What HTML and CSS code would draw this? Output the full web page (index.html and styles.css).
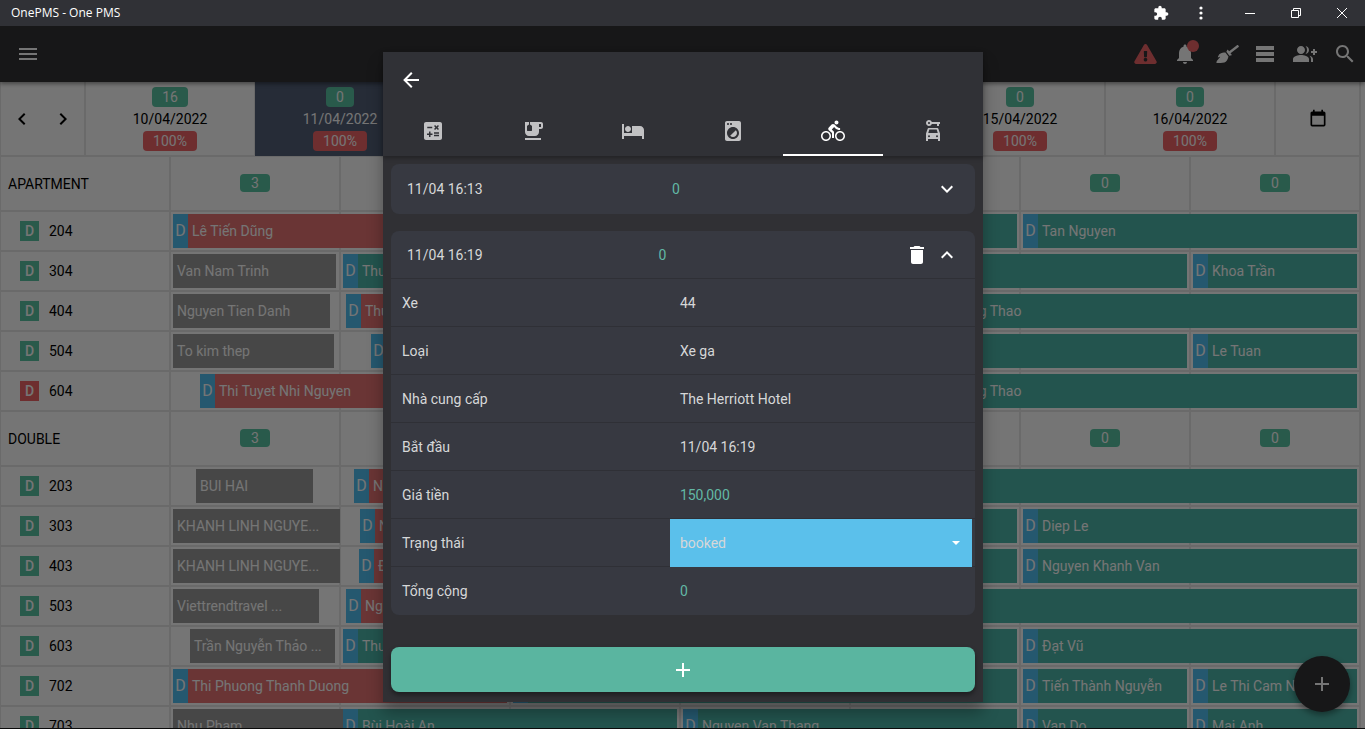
FILE: index.html
```html
<!DOCTYPE html>
<html lang="vi">
<head>
<meta charset="utf-8">
<title>OnePMS - One PMS</title>
<link rel="stylesheet" href="styles.css">
</head>
<body>
<div class="titlebar">
  <span class="titlebar-name">OnePMS - One PMS</span>
  <button class="win-btn" aria-label="Extensions"><svg width="16" height="16" viewBox="0 0 24 24"><path d="M20.5 11H19V7c0-1.1-.9-2-2-2h-4V3.5C13 2.12 11.88 1 10.5 1S8 2.12 8 3.5V5H4c-1.1 0-1.99.9-1.99 2v3.8H3.5c1.49 0 2.7 1.21 2.7 2.7s-1.21 2.7-2.7 2.7H2V20c0 1.1.9 2 2 2h3.8v-1.5c0-1.49 1.21-2.7 2.7-2.7 1.49 0 2.7 1.21 2.7 2.7V22H17c1.1 0 2-.9 2-2v-4h1.5c1.38 0 2.5-1.12 2.5-2.5S21.88 11 20.5 11z"/></svg></button>
  <button class="win-btn" aria-label="More"><svg width="4" height="14" viewBox="0 0 4 14"><circle cx="2" cy="2" r="1.6"/><circle cx="2" cy="7" r="1.6"/><circle cx="2" cy="12" r="1.6"/></svg></button>
  <button class="win-btn wide" aria-label="Minimize"><svg width="10" height="10" viewBox="0 0 10 10"><path d="M0 5h10v1H0z"/></svg></button>
  <button class="win-btn wide" aria-label="Restore"><svg class="stroke" width="10" height="10" viewBox="0 0 10 10"><path d="M.5 2.5h7v7h-7zM2.500 2.500v-2h7v7h-2"/></svg></button>
  <button class="win-btn wide" aria-label="Close"><svg class="stroke" width="10" height="10" viewBox="0 0 10 10"><path d="M0 0l10 10M10 0L0 10"/></svg></button>
</div>

<div class="app">
  <header class="topbar">
    <button class="top-btn menu" aria-label="Menu"><svg width="24" height="24" viewBox="0 0 24 24"><path d="M3 6h18v2H3zM3 11h18v2H3zM3 16h18v2H3z"/></svg></button>
    <button class="top-btn alert" aria-label="Alerts"><svg width="23" height="20" viewBox="0 0 576 512"><path d="M569.517 440.013C587.975 472.007 564.806 512 527.94 512H48.054c-36.937 0-59.999-40.055-41.577-71.987L246.423 23.985c18.467-32.009 64.72-31.951 83.154 0l239.94 416.028zM288 354c-25.405 0-46 20.595-46 46s20.595 46 46 46 46-20.595 46-46-20.595-46-46-46zm-43.673-165.346l7.418 136c.347 6.364 5.609 11.346 11.982 11.346h48.546c6.373 0 11.635-4.982 11.982-11.346l7.418-136c.375-6.874-5.098-12.654-11.982-12.654h-63.383c-6.884 0-12.356 5.78-11.981 12.654z"/></svg></button>
    <button class="top-btn" aria-label="Notifications"><svg width="24" height="24" viewBox="0 0 24 24"><path d="M12 22c1.100 0 2-.9 2-2h-4c0 1.100.89 2 2 2zm6-6v-5c0-3.070-1.640-5.640-4.500-6.320V4c0-.83-.67-1.500-1.500-1.500s-1.500.67-1.500 1.500v.68C7.630 5.360 6 7.920 6 11v5l-2 2v1h16v-1l-2-2z"/></svg><span class="dot"></span></button>
    <button class="top-btn" aria-label="Housekeeping"><svg width="28" height="18" viewBox="-150 0 790 512"><path d="M256.470 216.770l86.730 109.180s-16.600 102.360-76.570 150.120C206.660 523.850 0 510.190 0 510.190s3.800-23.140 11-55.430l94.620-112.170c3.970-4.700-.87-11.620-6.650-9.500l-60.400 22.090c14.440-41.660 32.720-80.040 54.600-97.470 59.970-47.760 163.300-40.940 163.300-40.940zM636.530 31.030l-19.860-25c-5.490-6.900-15.520-8.050-22.410-2.560l-232.480 177.800-34.140-42.970c-5.090-6.410-15.140-5.210-18.590 2.210l-25.330 54.550 86.730 109.180 58.800-12.450c8-1.690 11.420-11.200 6.340-17.600l-34.090-42.920 232.480-177.800c6.890-5.480 8.040-15.530 2.550-22.440z"/></svg></button>
    <button class="top-btn" aria-label="List"><svg width="18" height="16" viewBox="0 0 18 16"><path d="M0 0h18v4H0zM0 6h18v4H0zM0 12h18v4H0z"/></svg></button>
    <button class="top-btn" aria-label="Add guests"><svg width="24" height="24" viewBox="0 0 24 24"><path d="M22 9V7h-2v2h-2v2h2v2h2v-2h2V9zM8 12c2.210 0 4-1.790 4-4s-1.790-4-4-4-4 1.790-4 4 1.790 4 4 4zm0 1c-2.670 0-8 1.340-8 4v3h16v-3c0-2.660-5.330-4-8-4zm4.510-8.950C13.430 5.110 14 6.490 14 8s-.57 2.890-1.490 3.950C14.470 11.700 16 10.040 16 8s-1.530-3.700-3.490-3.950zm4.020 9.780C17.420 14.660 18 15.700 18 17v3h2v-3c0-1.450-1.590-2.510-3.470-3.170z"/></svg></button>
    <button class="top-btn" aria-label="Search"><svg width="24" height="24" viewBox="0 0 24 24"><path d="M15.500 14h-.79l-.28-.27C15.410 12.590 16 11.110 16 9.500 16 5.910 13.090 3 9.500 3S3 5.910 3 9.500 5.910 16 9.500 16c1.610 0 3.090-.59 4.230-1.570l.27.28v.79l5 4.990L20.490 19l-4.990-5zm-6 0C7.010 14 5 11.990 5 9.500S7.010 5 9.500 5 14 7.010 14 9.500 11.990 14 9.500 14z"/></svg></button>
  </header>

  <main class="board">
    <div class="days">
      <div class="day-nav">
        <button aria-label="Previous"><svg width="24" height="24" viewBox="0 0 24 24"><path d="M15.410 16.580L10.830 12l4.580-4.590L14 6l-6 6 6 6z"/></svg></button>
        <button aria-label="Next"><svg width="24" height="24" viewBox="0 0 24 24"><path d="M8.590 16.580L13.170 12 8.590 7.410 10 6l6 6-6 6z"/></svg></button>
      </div>
      <div class="day"><span class="tag">16</span><span>10/04/2022</span><span class="tag full">100%</span></div>
      <div class="day today"><span class="tag">0</span><span>11/04/2022</span><span class="tag full">100%</span></div>
      <div class="day"></div>
      <div class="day"></div>
      <div class="day"></div>
      <div class="day"><span class="tag">0</span><span>15/04/2022</span><span class="tag full">100%</span></div>
      <div class="day"><span class="tag">0</span><span>16/04/2022</span><span class="tag full">100%</span></div>
      <div class="day-nav"><button aria-label="Pick a date"><svg width="20" height="20" viewBox="0 0 24 24"><path d="M19 19H5V8h14M16 1v2H8V1H6v2H5c-1.110 0-2 .89-2 2v14a2 2 0 0 0 2 2h14a2 2 0 0 0 2-2V5c0-1.110-.9-2-2-2h-1V1"/></svg></button></div>
    </div>

    <div class="group"><div class="group-name">APARTMENT</div><div class="counts"><span class="tag n1">3</span><span class="tag n6">0</span><span class="tag n7">0</span></div></div>
    <div class="row"><div class="room"><b class="state">D</b>204</div><div class="track">
      <div class="bar red" style="grid-column:4/338"><i>D</i><span>Lê Tiến Dũng</span></div>
      <div class="bar" style="grid-column:344/848"></div>
      <div class="bar" style="grid-column:854/1188"><i>D</i><span>Tan Nguyen</span></div></div></div>
    <div class="row"><div class="room"><b class="state">D</b>304</div><div class="track">
      <div class="bar past" style="grid-column:4/167"><span>Van Nam Trinh</span></div>
      <div class="bar" style="grid-column:174/1018"><i>D</i><span>Thu</span></div>
      <div class="bar" style="grid-column:1024/1188"><i>D</i><span>Khoa Trần</span></div></div></div>
    <div class="row"><div class="room"><b class="state">D</b>404</div><div class="track">
      <div class="bar past" style="grid-column:4/161"><span>Nguyen Tien Danh</span></div>
      <div class="bar red" style="grid-column:177/338"><i>D</i><span>Thu</span></div>
      <div class="bar" style="grid-column:700/1188"><i>D</i><span>Nguyen Phuong Thao</span></div></div></div>
    <div class="row"><div class="room"><b class="state">D</b>504</div><div class="track">
      <div class="bar past" style="grid-column:4/165"><span>To kim thep</span></div>
      <div class="bar" style="grid-column:202/1018"><i>D</i></div>
      <div class="bar" style="grid-column:1024/1188"><i>D</i><span>Le Tuan</span></div></div></div>
    <div class="row"><div class="room"><b class="state dirty">D</b>604</div><div class="track">
      <div class="bar red" style="grid-column:31/338"><i>D</i><span>Thi Tuyet Nhi Nguyen</span></div>
      <div class="bar" style="grid-column:700/1188"><i>D</i><span>Nguyen Phuong Thao</span></div></div></div>

    <div class="group"><div class="group-name">DOUBLE</div><div class="counts"><span class="tag n1">3</span><span class="tag n6">0</span><span class="tag n7">0</span></div></div>
    <div class="row"><div class="room"><b class="state">D</b>203</div><div class="track">
      <div class="bar past" style="grid-column:27/144"><span>BUI HAI</span></div>
      <div class="bar red" style="grid-column:185/338"><i>D</i><span>Ng</span></div>
      <div class="bar" style="grid-column:344/1188"></div></div></div>
    <div class="row"><div class="room"><b class="state">D</b>303</div><div class="track">
      <div class="bar past" style="grid-column:4/171"><span>KHANH LINH NGUYE...</span></div>
      <div class="bar red" style="grid-column:191/338"><i>D</i><span>N</span></div>
      <div class="bar" style="grid-column:344/848"></div>
      <div class="bar" style="grid-column:854/1188"><i>D</i><span>Diep Le</span></div></div></div>
    <div class="row"><div class="room"><b class="state">D</b>403</div><div class="track">
      <div class="bar past" style="grid-column:4/171"><span>KHANH LINH NGUYE...</span></div>
      <div class="bar red" style="grid-column:190/338"><i>D</i><span>Đ</span></div>
      <div class="bar" style="grid-column:344/848"></div>
      <div class="bar" style="grid-column:854/1188"><i>D</i><span>Nguyen Khanh Van</span></div></div></div>
    <div class="row"><div class="room"><b class="state">D</b>503</div><div class="track">
      <div class="bar past" style="grid-column:4/150"><span>Viettrendtravel ...</span></div>
      <div class="bar red" style="grid-column:177/338"><i>D</i><span>Ng</span></div>
      <div class="bar" style="grid-column:344/1188"></div></div></div>
    <div class="row"><div class="room"><b class="state">D</b>603</div><div class="track">
      <div class="bar past" style="grid-column:21/166"><span>Trần Nguyễn Thảo ...</span></div>
      <div class="bar" style="grid-column:174/848"><i>D</i><span>Thu</span></div>
      <div class="bar" style="grid-column:854/1188"><i>D</i><span>Đạt Vũ</span></div></div></div>
    <div class="row"><div class="room"><b class="state">D</b>702</div><div class="track">
      <div class="bar red" style="grid-column:4/338"><i>D</i><span>Thi Phuong Thanh Duong</span></div>
      <div class="bar" style="grid-column:344/848"><i>D</i></div>
      <div class="bar" style="grid-column:854/1018"><i>D</i><span>Tiến Thành Nguyễn</span></div>
      <div class="bar" style="grid-column:1024/1188"><i>D</i><span>Le Thi Cam Nhung</span></div></div></div>
    <div class="row"><div class="room"><b class="state">D</b>703</div><div class="track">
      <div class="bar past" style="grid-column:4/174"><span>Nhu Pham</span></div>
      <div class="bar" style="grid-column:174/508"><i>D</i><span>Bùi Hoài An</span></div>
      <div class="bar" style="grid-column:514/848"><i>D</i><span>Nguyen Van Thang</span></div>
      <div class="bar" style="grid-column:854/1018"><i>D</i><span>Van Do</span></div>
      <div class="bar" style="grid-column:1024/1188"><i>D</i><span>Mai Anh</span></div></div></div>
  </main>
  <button class="fab" aria-label="New booking"><svg width="24" height="24" viewBox="0 0 24 24"><path d="M19 13h-6v6h-2v-6H5v-2h6V5h2v6h6z"/></svg></button>

  <div class="overlay">
    <section class="dialog" role="dialog" aria-label="Dịch vụ">
      <div class="dialog-head">
        <div class="dialog-bar"><button class="back" aria-label="Back"><svg width="24" height="24" viewBox="0 0 24 24"><path d="M20 11v2H8l5.500 5.500-1.420 1.420L4.160 12l7.920-7.920L13.500 5.500 8 11z"/></svg></button></div>
        <nav class="tabs">
          <button class="tab" aria-label="Calculator"><svg width="24" height="24" viewBox="0 0 24 24"><path d="M19 3H5c-1.100 0-2 .9-2 2v14c0 1.100.9 2 2 2h14c1.100 0 2-.9 2-2V5c0-1.100-.9-2-2-2zm-5.970 4.060L14.090 6l1.410 1.410L16.910 6l1.060 1.060-1.410 1.410 1.410 1.410-1.060 1.060-1.410-1.400-1.410 1.410-1.060-1.060 1.410-1.410-1.410-1.420zm-6.780.66h5v1.500h-5v-1.500zM11.500 16h-2v2H8v-2H6v-1.500h2v-2h1.500v2h2V16zm6.500 1.250h-5v-1.500h5v1.500zm0-2.500h-5v-1.500h5v1.500z"/></svg></button>
          <button class="tab" aria-label="Minibar"><svg width="24" height="24" viewBox="0 0 24 24"><path d="M20 3H9v2.400l1.810 1.450c.12.090.19.240.19.390v4.260c0 .28-.22.500-.5.500h-4c-.28 0-.5-.22-.5-.5V7.240c0-.15.070-.3.190-.39L8 5.400V3H4v10c0 2.210 1.790 4 4 4h6c2.210 0 4-1.790 4-4v-3h2c1.110 0 2-.89 2-2V5c0-1.110-.89-2-2-2zm0 5h-2V5h2v3zM4 19h16v2H4z"/></svg></button>
          <button class="tab" aria-label="Room"><svg width="24" height="24" viewBox="0 0 24 24"><path d="M7 13c1.660 0 3-1.340 3-3S8.660 7 7 7s-3 1.340-3 3 1.340 3 3 3zm12-6h-8v7H3V5H1v15h2v-3h18v3h2v-9c0-2.210-1.790-4-4-4z"/></svg></button>
          <button class="tab" aria-label="Laundry"><svg width="24" height="24" viewBox="0 0 24 24"><path d="M9.170 16.830c1.560 1.560 4.100 1.560 5.660 0 1.560-1.560 1.560-4.100 0-5.660l-5.660 5.660zM18 2.010L6 2c-1.110 0-2 .89-2 2v16c0 1.110.89 2 2 2h12c1.110 0 2-.89 2-2V4c0-1.110-.89-1.990-2-1.990zM10 4c.55 0 1 .45 1 1s-.45 1-1 1-1-.45-1-1 .45-1 1-1zM7 4c.55 0 1 .45 1 1s-.45 1-1 1-1-.45-1-1 .45-1 1-1zm5 16c-3.310 0-6-2.690-6-6s2.690-6 6-6 6 2.690 6 6-2.690 6-6 6z"/></svg></button>
          <button class="tab active" aria-label="Bike rental"><svg width="24" height="24" viewBox="0 0 24 24"><path d="M15.500 5.500c1.100 0 2-.9 2-2s-.9-2-2-2-2 .9-2 2 .9 2 2 2zM5 12c-2.800 0-5 2.200-5 5s2.200 5 5 5 5-2.200 5-5-2.200-5-5-5zm0 8.500c-1.900 0-3.500-1.600-3.500-3.500s1.600-3.500 3.500-3.500 3.500 1.600 3.500 3.500-1.600 3.500-3.500 3.500zm5.800-10l2.400-2.400.8.8c1.300 1.300 3 2.100 5.100 2.100V9c-1.500 0-2.700-.6-3.600-1.500l-1.900-1.900c-.5-.4-1-.6-1.600-.6s-1.100.2-1.400.6L7.800 8.400c-.4.4-.6.9-.6 1.400 0 .6.2 1.100.6 1.400L11 14v5h2v-6.200l-2.200-2.300zM19 12c-2.800 0-5 2.200-5 5s2.200 5 5 5 5-2.200 5-5-2.200-5-5-5zm0 8.500c-1.900 0-3.500-1.600-3.500-3.500s1.600-3.500 3.500-3.500 3.500 1.600 3.500 3.500-1.600 3.500-3.500 3.500z"/></svg></button>
          <button class="tab" aria-label="Car rental"><svg width="24" height="24" viewBox="0 0 24 24"><path fill-rule="evenodd" d="M10.830 3C10.410 1.830 9.300 1 8 1 6.340 1 5 2.340 5 4s1.340 3 3 3c1.300 0 2.410-.84 2.830-2H16v2h2V5h1V3zM8 5c-.55 0-1-.45-1-1s.45-1 1-1 1 .45 1 1-.45 1-1 1zM16.390 9H7.610c-.43 0-.81.28-.95.68L5 14.500V22h2v-2h10v2h2v-7.500l-1.660-4.820c-.14-.4-.52-.68-.95-.68zM8.330 10.500h7.340l1.080 3.500H7.250zM8 16.200a1 1 0 1 1 0 2 1 1 0 0 1 0-2zm8 0a1 1 0 1 1 0 2 1 1 0 0 1 0-2z"/></svg></button>
        </nav>
      </div>
      <div class="dialog-body">
        <article class="card">
          <div class="card-head tall"><span>11/04 16:13</span><span class="money">0</span><button aria-label="Expand"><svg width="24" height="24" viewBox="0 0 24 24"><path d="M7.410 8.580L12 13.170l4.590-4.590L18 10l-6 6-6-6z"/></svg></button></div>
        </article>
        <article class="card">
          <div class="card-head"><span>11/04 16:19</span><span class="money">0</span><button class="trash" aria-label="Delete"><svg width="24" height="24" viewBox="0 0 24 24"><path d="M6 19c0 1.100.9 2 2 2h8c1.100 0 2-.9 2-2V7H6v12zM19 4h-3.500l-1-1h-5l-1 1H5v2h14V4z"/></svg></button><button aria-label="Collapse"><svg width="24" height="24" viewBox="0 0 24 24"><path d="M7.410 15.410L12 10.830l4.590 4.580L18 14l-6-6-6 6z"/></svg></button></div>
          <div class="field"><span>Xe</span><span class="value">44</span></div>
          <div class="field"><span>Loại</span><span class="value">Xe ga</span></div>
          <div class="field"><span>Nhà cung cấp</span><span class="value">The Herriott Hotel</span></div>
          <div class="field"><span>Bắt đầu</span><span class="value">11/04 16:19</span></div>
          <div class="field"><span>Giá tiền</span><span class="value money">150,000</span></div>
          <div class="field"><label for="status">Trạng thái</label><div class="status"><select id="status"><option>booked</option></select><svg width="8" height="4" viewBox="0 0 8 4"><path d="M0 0h8L4 4z"/></svg></div></div>
          <div class="field"><span>Tổng cộng</span><span class="value money">0</span></div>
        </article>
        <button class="add" aria-label="Add"><svg width="24" height="24" viewBox="0 0 24 24"><path d="M19 13h-6v6h-2v-6H5v-2h6V5h2v6h6z"/></svg></button>
      </div>
    </section>
  </div>
</div>
</body>
</html>
```

FILE: styles.css
```css
* { box-sizing: border-box; }

body {
  margin: 0;
  height: 100vh;
  display: flex;
  flex-direction: column;
  overflow: hidden;
  font: 14px/20px Roboto, "Noto Sans", sans-serif;
  color: #000;
  background: #fff;
}

button {
  display: flex;
  align-items: center;
  justify-content: center;
  padding: 0;
  border: 0;
  background: none;
  color: inherit;
  font: inherit;
}

svg { display: block; flex: none; fill: currentColor; }
.stroke { fill: none; stroke: currentColor; }

/* Window title bar */
.titlebar {
  display: flex;
  flex: none;
  align-items: stretch;
  height: 26px;
  padding-left: 11px;
  background: #303136;
  color: #fff;
}
.titlebar-name { margin-right: auto; font: 12px/26px "Open Sans", sans-serif; }
.win-btn { width: 40px; }
.win-btn.wide { width: 46px; }
.win-btn:nth-child(3) { margin-right: 6px; }

.app {
  position: relative;
  flex: 1;
  min-height: 0;
  overflow: hidden;
  border-bottom: 1px solid #0a0a0a;
}

/* Application bar */
.topbar {
  position: relative;
  display: flex;
  align-items: center;
  height: 56px;
  padding-left: 8px;
  background: #323235;
  color: #fff;
  box-shadow: 0 2px 4px rgba(0, 0, 0, .4);
}
.top-btn { position: relative; width: 40px; height: 40px; }
.top-btn.menu { margin-right: auto; }
.top-btn.alert { color: #f06568; }
.dot {
  position: absolute;
  top: 6px;
  right: 6px;
  width: 12px;
  height: 12px;
  border-radius: 50%;
  background: #f06568;
}

/* Booking board */
.board { margin-right: 4px; border-right: 1px solid #e6e6e6; }
.days { display: grid; grid-template-columns: 1fr repeat(7, 2fr) 1fr; height: 74px; }
.day, .day-nav { border: 1px solid #e6e6e6; border-top: 0; display: flex; align-items: center; }
.day { flex-direction: column; padding-top: 5px; gap: 2px; }
.day-nav { justify-content: space-around; }
.today { background: #536078; border-color: #536078; color: #fff; }
.tag {
  min-width: 28px;
  padding: 0 10px;
  border-radius: 4px;
  background: #5bc4a3;
  color: #fff;
  line-height: 20px;
  text-align: center;
}
.tag.full { background: #f06568; }

.group, .row { display: grid; grid-template-columns: 1fr 7fr; }
.group { height: 55px; }
.row { height: 40px; }
.group-name, .room {
  display: flex;
  align-items: center;
  border: 1px solid #e6e6e6;
  padding-left: 7px;
}
.room { padding-left: 19px; gap: 10px; }
.state {
  width: 19px;
  background: #5bc4a3;
  color: #fff;
  font-weight: 500;
  text-align: center;
}
.state.dirty { background: #f06568; }
.counts, .track {
  display: grid;
  border: solid #e6e6e6;
  border-width: 1px 0;
  background: linear-gradient(to right, #e6e6e6 1px, transparent 1px, transparent calc(100% - 1px), #e6e6e6 calc(100% - 1px)) 0 0 / calc(100% / 7) 100%;
}
.counts {
  grid-template-columns: repeat(7, 1fr);
  align-items: center;
  justify-items: center;
  padding-bottom: 2px;
}
.counts .tag { width: 30px; line-height: 18px; }
.n1 { grid-column: 1; }
.n6 { grid-column: 6; }
.n7 { grid-column: 7; }
.track { grid-template-columns: repeat(1190, minmax(0, 1fr)); padding: 2px 0; }
.bar {
  grid-row: 1;
  display: flex;
  min-width: 0;
  overflow: hidden;
  background: #4eb7aa;
  color: #fff;
  line-height: 34px;
}
.bar i {
  flex: none;
  width: 15px;
  background: #52c0f2;
  font-style: normal;
  font-size: 16px;
  text-align: center;
}
.bar span {
  min-width: 0;
  padding: 0 4px;
  overflow: hidden;
  text-overflow: ellipsis;
  white-space: nowrap;
}
.bar.red { background: #e67474; }
.bar.past { background: #9c9c9c; }

.fab {
  position: absolute;
  right: 15px;
  bottom: 16px;
  width: 56px;
  height: 56px;
  border-radius: 50%;
  background: #323235;
  color: #fff;
  box-shadow: 0 3px 6px rgba(0, 0, 0, .4);
}

/* Service dialog */
.overlay {
  position: absolute;
  inset: 0;
  display: flex;
  justify-content: center;
  padding: 26px 16px 26px 17px;
  background: rgba(0, 0, 0, .54);
}
.dialog {
  display: flex;
  flex-direction: column;
  width: 100%;
  max-width: 600px;
  background: #303034;
  color: #d6d7d8;
  box-shadow: 0 11px 15px rgba(0, 0, 0, .3);
}
.dialog-head { background: #303136; box-shadow: 0 2px 4px rgba(0, 0, 0, .3); }
.dialog-bar { display: flex; align-items: center; height: 56px; padding-left: 16px; color: #fff; }
.tabs { display: flex; }
.tab { flex: 1; height: 48px; color: #c1c1c3; border-bottom: 2px solid transparent; }
.tab.active { color: #fff; border-color: #fff; }

.dialog-body { display: flex; flex: 1; flex-direction: column; padding: 8px 8px 10px; }
.card { margin-bottom: 17px; border-radius: 8px; background: #373941; }
.card-head { display: flex; align-items: center; height: 48px; padding: 0 18px 0 16px; }
.card-head.tall { height: 50px; }
.card-head span { flex: 1; }
.card-head button { width: 20px; color: #fff; }
.card-head .trash { width: 14px; margin-right: 13px; }
.card .money { color: #62b8a5; }
.field {
  display: grid;
  grid-template-columns: 48% 52%;
  align-items: center;
  height: 48px;
  padding-right: 3px;
  box-shadow: 0 -1px #2f3036;
}
.field > :first-child { padding-left: 11px; }
.value { padding-left: 10px; }
.status { position: relative; height: 48px; }
.status select {
  width: 100%;
  height: 100%;
  padding: 0 10px;
  border: 0;
  border-radius: 0;
  appearance: none;
  background: #5bc0eb;
  color: #d6d7d8;
  font: inherit;
}
.status svg { position: absolute; right: 12px; top: 22px; color: #fff; }
.add {
  height: 45px;
  margin-top: auto;
  border-radius: 8px;
  background: #5ab5a0;
  color: #fff;
  box-shadow: 0 3px 5px rgba(0, 0, 0, .4);
}
```
